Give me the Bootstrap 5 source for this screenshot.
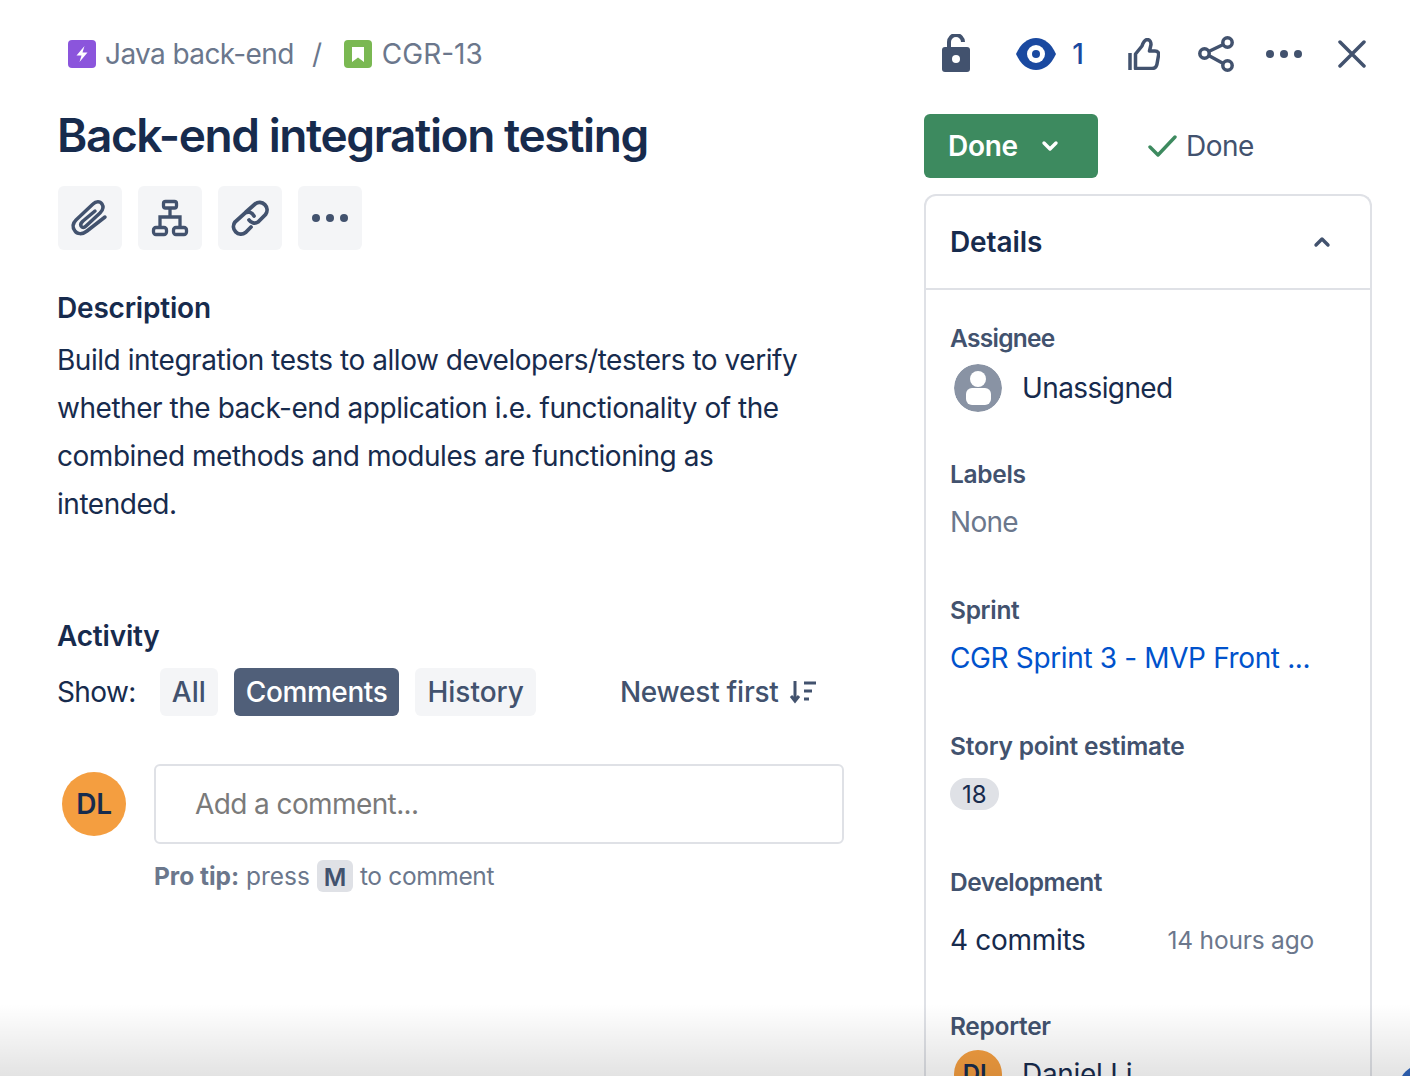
<!DOCTYPE html>
<html lang="en">
<head>
<meta charset="utf-8">
<title>CGR-13</title>
<link href="https://cdn.jsdelivr.net/npm/bootstrap@5.3.0/dist/css/bootstrap.min.css" rel="stylesheet">
<style>
html,body{height:1076px;overflow:hidden;background:#fff}
body{font-family:Inter,"Liberation Sans",sans-serif;font-size:28px;color:#172b4d;line-height:48px;letter-spacing:-.3px}
.shell{height:1076px;overflow:hidden;padding:0 38px 0 57px;gap:80px}
.leftcol{width:787px;flex:none}
.rightcol{width:448px;flex:none}
.crumbs{height:107px;padding:0 0 0 11px;color:#6b778c;gap:9px;letter-spacing:-.6px}
.crumb-ic{width:28px;height:28px;flex:none}
.crumb-key{letter-spacing:0;margin-left:1px}
.crumb-sep{margin:0 8px 0 4px;width:20px;text-align:center}
.title{font-size:46px;font-weight:600;line-height:56px;letter-spacing:-1.4px;color:#172b4d;margin:0 0 23px}
.tool{width:64px;height:64px;background:#f4f5f7;border-radius:6px;border:0;padding:0}
.toolbar{gap:16px;margin:0 0 34px 1px}
.sect{font-size:28px;font-weight:600;line-height:48px;margin:0;color:#172b4d;letter-spacing:-.2px}
.desc{margin:4px 0 84px;width:760px;letter-spacing:-.46px}
.showrow{height:48px;margin-top:8px;gap:16px;color:#172b4d}
.chip{height:48px;border:0;padding:0 12px;border-radius:6px;background:#f4f5f7;color:#42526e;font-size:28px;line-height:48px;font-weight:500;letter-spacing:0}
.chip-on{background:#505f79;color:#fff;letter-spacing:-.4px}
.sorter{margin-left:68px;color:#42526e;font-weight:500;gap:10px;letter-spacing:-.25px}
.show-label{margin-right:8px;letter-spacing:-.6px}
.cmt{margin-top:48px;gap:28px;padding-left:5px}
.avatar{width:64px;height:64px;border-radius:50%;background:#f49e40;font-weight:600;color:#172b4d;margin-top:8px;flex:none}
.cmt-box{width:690px;height:80px;border:2px solid #dfe1e6;border-radius:6px;padding-left:39px;color:#7a7a7a;line-height:76px;letter-spacing:-.6px}
.tip{margin:8px 0 0 97px;font-size:24.5px;color:#6b778c;line-height:48px;gap:7px;letter-spacing:-.35px}
.tip b{font-weight:700}
.tip-lead{letter-spacing:-.02px}
.tip-end{margin-left:0}
.kbd-m{background:#dfe1e6;color:#42526e;border-radius:6px;font-weight:600;width:36px;text-align:center;height:32px;line-height:34px;display:inline-block}
.topbar{height:108px;margin-bottom:6px}
.topbar svg{flex:none}
.ml-lock{margin-left:18px;margin-bottom:2px}
.ml-eye{margin-left:46px}
.watch-n{margin-left:10px;width:24px;color:#1a49a0;text-align:center;letter-spacing:0;font-weight:500}
.ml-thumb{margin-left:38px}
.ml-share{margin-left:38px}
.ml-dots{margin-left:32px}
.ml-x{margin-left:36px}
.stat-row{height:64px;gap:50px}
.stat-btn{width:174px;height:64px;background:#3d8a5f;color:#fff;border:0;border-radius:6px;font-size:28px;font-weight:600;padding:0 0 0 24px;gap:22px;letter-spacing:-.3px}
.stat-btn:hover{background:#3d8a5f;color:#fff}
.stat-txt{color:#42526e;gap:8px;letter-spacing:-.5px}
.panel{margin-top:16px;border:2px solid #dfe1e6;border-bottom:0;border-radius:12px 12px 0 0;height:900px}
.panel-hd{height:94px;border-bottom:2px solid #dfe1e6;padding:0 38px 0 24px;font-weight:600;color:#172b4d;letter-spacing:-.1px}
.panel-bd{padding:24px 24px 0}
.field{height:136px}
.field-tall{height:144px}
.flabel{font-size:24.5px;font-weight:600;color:#42526e;line-height:48px;letter-spacing:-.3px}
.flabel-a{letter-spacing:-.7px}
.flabel-d{letter-spacing:-.45px}
.flabel-s{letter-spacing:-.2px}
.fval{line-height:48px}
.val-narrow{letter-spacing:-.6px;padding-top:2px}
.muted-val{color:#6b778c;letter-spacing:-.7px}
.link-val{color:#0052cc;letter-spacing:-.36px}
.av-sm{width:48px;height:48px;border-radius:50%;flex:none;margin:0 20px 0 4px}
.pts{background:#dfe1e6;border-radius:16px;height:32px;line-height:33px;padding:0 12px;font-size:24px;width:fit-content;margin-top:8px;letter-spacing:0}
.ago{font-size:24.5px;color:#6b778c;margin-right:32px;letter-spacing:-.2px}
.dev-row{margin-top:10px}
.av-rep{background:#f49e40;color:#172b4d;font-size:24px;font-weight:600}
.fade-edge{position:absolute;left:0;right:0;bottom:0;height:72px;background:linear-gradient(to bottom,rgba(0,0,0,0),rgba(0,0,0,.11));pointer-events:none}
.corner{position:absolute;right:-40px;bottom:-40px;width:52px;height:52px;border-radius:50%;background:#2a5aa8}
</style>
</head>
<body>
<div class="shell d-flex position-relative">
  <div class="leftcol">
    <div class="crumbs d-flex align-items-center">
      <svg class="crumb-ic" viewBox="0 0 28 28"><rect width="28" height="28" rx="4" fill="#8b55dc"/><path d="M16.500 6l-8 9.500h5L11.500 22l8-9.500h-5z" fill="#fff"/></svg>
      <span>Java back-end</span>
      <span class="crumb-sep">/</span>
      <svg class="crumb-ic" viewBox="0 0 28 28"><rect width="28" height="28" rx="4" fill="#7ab852"/><path d="M8 7h12v15l-6-4.500L8 22z" fill="#fff"/></svg>
      <span class="crumb-key">CGR-13</span>
    </div>
    <h1 class="title">Back-end integration testing</h1>
    <div class="toolbar d-flex">
      <button class="tool d-flex align-items-center justify-content-center" aria-label="Attach"><svg width="64" height="64" viewBox="0 0 64 64" fill="none" stroke="#42526e" stroke-width="3.500" stroke-linecap="round" stroke-linejoin="round"><path d="M47 31 29 45c-5 4-10 3-12 0-3-4-2-8 1-11l17-16c3-3 7-3 9 0 2 3 1 6-2 9L28 40c-2 2-4 2-5 0-1-2 0-3 2-5l12-10"/></svg></button>
      <button class="tool d-flex align-items-center justify-content-center" aria-label="Child issues"><svg width="64" height="64" viewBox="0 0 64 64" fill="none" stroke="#42526e" stroke-width="3.300"><rect x="25.500" y="15.500" width="13" height="6.500" rx="2"/><rect x="15.500" y="41.500" width="13" height="7" rx="2.500"/><rect x="35.500" y="41.500" width="13" height="7" rx="2.500"/><path d="M32 22v9M22 41v-10h20v10"/></svg></button>
      <button class="tool d-flex align-items-center justify-content-center" aria-label="Link"><svg width="64" height="64" viewBox="0 0 64 64" fill="none" stroke="#42526e" stroke-width="3.800" stroke-linecap="round"><path d="M28 26l9-8a7.500 7.500 0 0 1 10.500 10.500L40 36c-3 2-7 1-9-2"/><path d="M36 30c-2-4-6-5-9-3l-10 9a7.500 7.500 0 0 0 10.500 10.500L33 41"/></svg></button>
      <button class="tool d-flex align-items-center justify-content-center" aria-label="More"><svg width="40" height="40" viewBox="0 0 40 40" fill="#42526e"><circle cx="6" cy="20" r="4"/><circle cx="20" cy="20" r="4"/><circle cx="34" cy="20" r="4"/></svg></button>
    </div>
    <h2 class="sect">Description</h2>
    <p class="desc">Build integration tests to allow developers/testers to verify whether the back-end application i.e. functionality of the combined methods and modules are functioning as intended.</p>
    <h2 class="sect">Activity</h2>
    <div class="showrow d-flex align-items-center">
      <span class="show-label">Show:</span>
      <button class="chip">All</button>
      <button class="chip chip-on">Comments</button>
      <button class="chip">History</button>
      <span class="sorter d-flex align-items-center">Newest first
        <svg width="28" height="24" viewBox="0 0 28 24" fill="none" stroke="#42526e" stroke-width="3"><path d="M6 1v20M2 16l4 5 4-5"/><path d="M15 3h12M15 11h8M15 19h5"/></svg>
      </span>
    </div>
    <div class="cmt d-flex">
      <div class="avatar d-flex align-items-center justify-content-center">DL</div>
      <div class="cmt-box">Add a comment...</div>
    </div>
    <div class="tip d-flex align-items-center"><span class="tip-lead"><b>Pro tip:</b> press</span><span class="kbd-m">M</span><span class="tip-end">to comment</span></div>
  </div>
  <div class="rightcol">
    <div class="topbar d-flex align-items-center">
      <svg class="ml-lock" width="28" height="38" viewBox="0 0 28 38" aria-label="Unlocked"><path d="M7 15V8a7 7 0 0 1 14 0" fill="none" stroke="#42526e" stroke-width="4"/><rect y="13" width="28" height="25" rx="3" fill="#42526e"/><circle cx="14" cy="25" r="4" fill="#fff"/></svg>
      <svg class="ml-eye" width="40" height="32" viewBox="0 0 40 32" aria-label="Watchers"><path d="M0 16C5 5 12 0 20 0s15 5 20 16c-5 11-12 16-20 16S5 27 0 16z" fill="#1a49a0"/><circle cx="20" cy="16" r="9" fill="#fff"/><circle cx="20" cy="16" r="4" fill="#1a49a0"/></svg>
      <span class="watch-n">1</span>
      <svg class="ml-thumb" width="32" height="32" viewBox="0 0 32 32" fill="none" stroke="#42526e" stroke-width="3.500" stroke-linejoin="round" aria-label="Like"><path d="M2 15v17"/><path d="M7.500 30.500V16L14 8c1-3 2-6 5-6.500 3 0 4 3 4 5l-1.500 6.500H27c3 0 4 2 3.500 4.500L29 26c-.5 3-2 4.500-5 4.500z"/></svg>
      <svg class="ml-share" width="36" height="36" viewBox="0 0 36 36" fill="none" stroke="#42526e" stroke-width="3.500" aria-label="Share"><circle cx="6.500" cy="17.500" r="4.700"/><circle cx="29.500" cy="6.500" r="4.700"/><circle cx="29.500" cy="29.500" r="4.700"/><path d="M10.700 15.500 25.300 8.500M10.700 19.500 25.300 27.500"/></svg>
      <svg class="ml-dots" width="36" height="8" viewBox="0 0 36 8" fill="#42526e" aria-label="More"><circle cx="4" cy="4" r="4"/><circle cx="18" cy="4" r="4"/><circle cx="32" cy="4" r="4"/></svg>
      <svg class="ml-x" width="28" height="28" viewBox="0 0 28 28" fill="none" stroke="#42526e" stroke-width="3.500" stroke-linecap="round" aria-label="Close"><path d="M2 2l24 24M26 2 2 26"/></svg>
    </div>
    <div class="stat-row d-flex align-items-center">
      <button class="stat-btn btn d-flex align-items-center">Done
        <svg width="20" height="20" viewBox="0 0 20 20" fill="none" stroke="#fff" stroke-width="3.400" stroke-linecap="round" stroke-linejoin="round"><path d="M4 7l6 6 6-6"/></svg>
      </button>
      <span class="stat-txt d-flex align-items-center">
        <svg width="30" height="24" viewBox="0 0 30 24" fill="none" stroke="#3d8a5f" stroke-width="3.400" stroke-linecap="round" stroke-linejoin="round"><path d="M2 13l8 8L27 3"/></svg>Done</span>
    </div>
    <div class="panel">
      <div class="panel-hd d-flex align-items-center justify-content-between">Details
        <svg width="20" height="20" viewBox="0 0 20 20" fill="none" stroke="#42526e" stroke-width="3.400" stroke-linecap="round" stroke-linejoin="round"><path d="M4 13l6-6 6 6"/></svg>
      </div>
      <div class="panel-bd">
        <div class="field">
          <div class="flabel flabel-a">Assignee</div>
          <div class="fval val-narrow d-flex align-items-center"><svg class="av-sm" viewBox="0 0 48 48"><circle cx="24" cy="24" r="24" fill="#8993a4"/><circle cx="24" cy="15" r="8" fill="#fff"/><rect x="12" y="24" width="25" height="17" rx="6" fill="#fff"/></svg>Unassigned</div>
        </div>
        <div class="field">
          <div class="flabel">Labels</div>
          <div class="fval muted-val">None</div>
        </div>
        <div class="field">
          <div class="flabel">Sprint</div>
          <div class="fval link-val">CGR Sprint 3 - MVP Front ...</div>
        </div>
        <div class="field">
          <div class="flabel flabel-s">Story point estimate</div>
          <div class="pts">18</div>
        </div>
        <div class="field field-tall">
          <div class="flabel flabel-d">Development</div>
          <div class="fval dev-row d-flex align-items-center justify-content-between"><span>4 commits</span><span class="ago">14 hours ago</span></div>
        </div>
        <div class="field">
          <div class="flabel">Reporter</div>
          <div class="fval d-flex align-items-center"><span class="av-sm av-rep d-flex align-items-center justify-content-center">DL</span>Daniel Li</div>
        </div>
      </div>
    </div>
  </div>
  <div class="fade-edge"></div>
  <div class="corner"></div>
</div>
</body>
</html>
